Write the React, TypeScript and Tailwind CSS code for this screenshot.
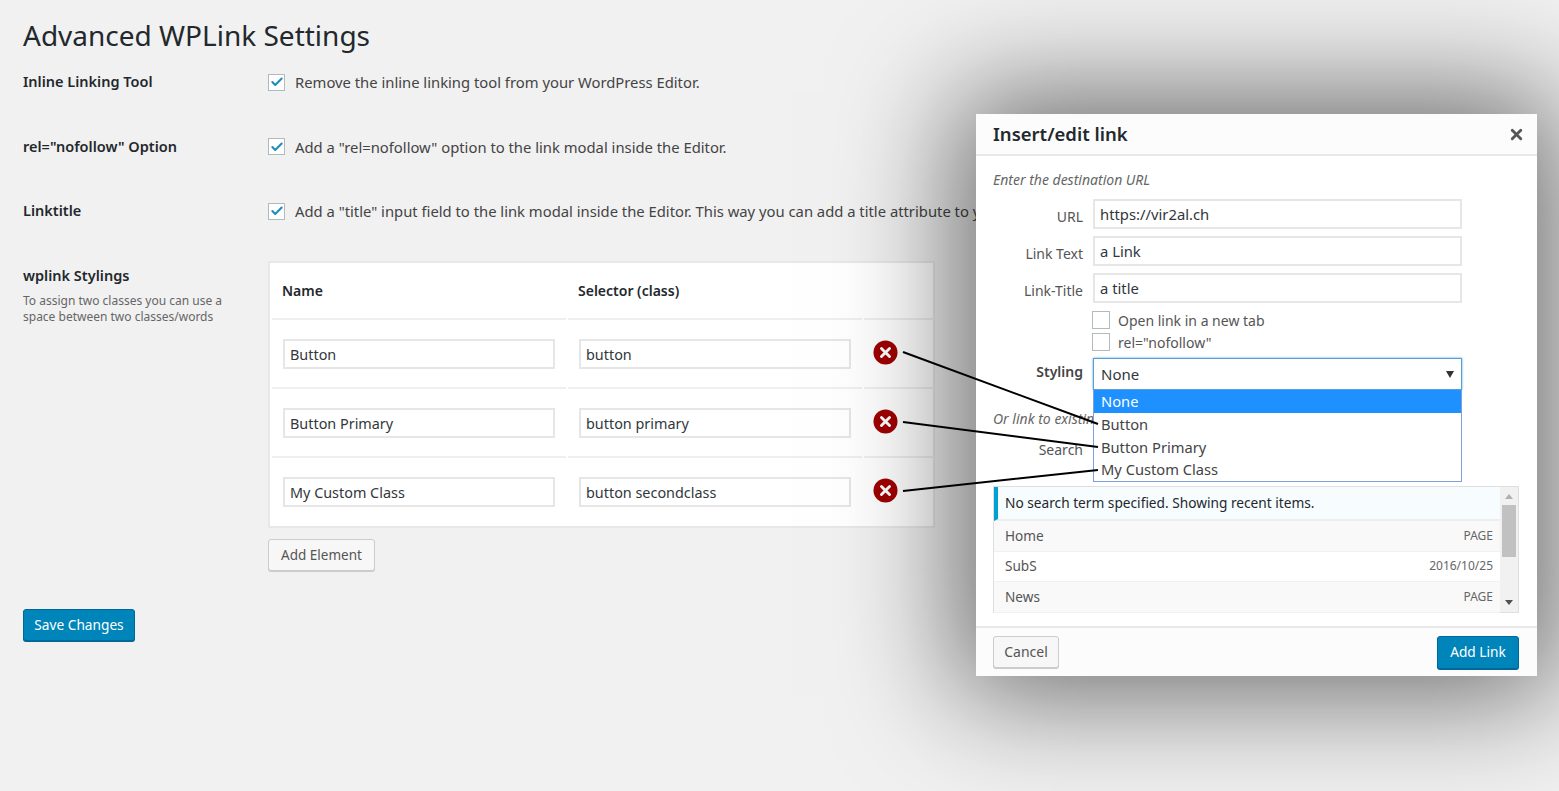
import { Check, X } from 'lucide-react';

const settings = [
  { label: 'Inline Linking Tool', text: 'Remove the inline linking tool from your WordPress Editor.' },
  { label: 'rel="nofollow" Option', text: 'Add a "rel=nofollow" option to the link modal inside the Editor.' },
  { label: 'Linktitle', text: 'Add a "title" input field to the link modal inside the Editor. This way you can add a title attribute to your links.' },
];

const stylings = [
  { name: 'Button', selector: 'button' },
  { name: 'Button Primary', selector: 'button primary' },
  { name: 'My Custom Class', selector: 'button secondclass' },
];

const results = [
  { title: 'Home', info: 'PAGE', bg: 'bg-[#f9f9f9]' },
  { title: 'SubS', info: '2016/10/25', bg: 'bg-white' },
  { title: 'News', info: 'PAGE', bg: 'bg-[#f9f9f9]' },
];

function DeleteIcon() {
  return (
    <svg width="25" height="25" viewBox="0 0 26 26" className="shrink-0 mb-[2px]">
      <circle cx="13" cy="13" r="12.5" fill="#a00000" />
      <path d="M8.8 8.8l8.4 8.4M17.2 8.8l-8.4 8.4" stroke="#fff" strokeWidth="3" strokeLinecap="round" />
    </svg>
  );
}

function ModalField({ label, value }: { label: string; value: string }) {
  return (
    <div className="flex items-start h-[37px]">
      <div className="w-[100px] pr-[10px] pt-[7px] text-right text-[14px] text-[#555]">{label}</div>
      <div className="w-[369px] h-[30px] border-2 border-[#e6e6e6] bg-white px-[5px] text-[14.8px] leading-[26px] text-[#32373c]">
        {value}
      </div>
    </div>
  );
}

function LinkModal() {
  return (
    <div className="absolute left-[976px] top-[114px] w-[561px] h-[562px] bg-white flex flex-col shadow-[0_0_110px_20px_rgba(0,0,0,0.55)]">
      {/* Header */}
      <div className="h-[42px] shrink-0 bg-[#fcfcfc] border-b-2 border-[#e8e8e8] pl-[17px] pr-[12px] flex items-center justify-between">
        <h2 className="text-[18.5px] font-semibold text-[#23282d]">Insert/edit link</h2>
        <X size={17} strokeWidth={4} className="text-[#555]" />
      </div>

      {/* Body */}
      <div className="relative flex-1 pl-[17px] pr-[18px]">
        <p className="pt-[13px] h-[43px] text-[14px] italic text-[#666]">Enter the destination URL</p>
        <ModalField label="URL" value="https://vir2al.ch" />
        <ModalField label="Link Text" value="a Link" />
        <ModalField label="Link-Title" value="a title" />

        <div className="ml-[99px] mt-[-1px] flex items-center gap-[8px] h-[22px] text-[14px] text-[#555]">
          <span className="w-[18px] h-[18px] border border-[#b4b9be] bg-white" />
          Open link in a new tab
        </div>
        <div className="ml-[99px] flex items-center gap-[8px] h-[22px] text-[14px] text-[#555]">
          <span className="w-[18px] h-[18px] border border-[#b4b9be] bg-white" />
          rel="nofollow"
        </div>

        <div className="flex mt-[5px]">
          <div className="w-[100px] pr-[10px] pt-[3px] text-right text-[14px] font-semibold text-[#444]">Styling</div>
          <div className="relative w-[369px]">
            <div className="h-[32px] border border-[#5b9dd9] shadow-[0_0_2px_rgba(30,140,190,0.8)] bg-white pl-[7px] pr-[7px] flex items-center justify-between text-[15px] text-[#32373c]">
              None
              <svg width="8" height="7" viewBox="0 0 8 7"><path d="M0 0h8L4 7z" fill="#333" /></svg>
            </div>
            {/* Open dropdown */}
            <div className="absolute z-20 left-0 top-[32px] w-full border border-[#7f9fd9] border-t-0 bg-white text-[14.7px] text-[#444]">
              <div className="h-[23px] bg-[#1e90ff] pl-[7px] text-white leading-[22px]">None</div>
              {stylings.map((s) => (
                <div key={s.name} className="h-[22.5px] pl-[7px] leading-[22px]">{s.name}</div>
              ))}
            </div>
          </div>
        </div>

        <p className="mt-[18px] h-[26px] text-[14px] italic text-[#666]">Or link to existing content</p>
        <div className="flex items-center h-[30px] mt-[2px]">
          <div className="w-[100px] pr-[10px] pb-[3px] text-right text-[14px] text-[#555]">Search</div>
          <div className="w-[369px] h-[30px] border-2 border-[#e6e6e6] bg-white" />
        </div>

        {/* Results */}
        <div className="mt-[20px] h-[127px] border border-[#dfdfdf] flex bg-white">
          <div className="flex-1 min-w-0">
            <div className="h-[34px] border-l-4 border-[#00a0d2] border-b-2 border-b-[#eeeeee] bg-[#f7fcfe] pl-[7px] flex items-center text-[13.7px] text-[#23282d]">
              No search term specified. Showing recent items.
            </div>
            {results.map((r) => (
              <div key={r.title} className={`${r.bg} h-[30.5px] pl-[11px] pr-[7px] flex items-center justify-between border-b border-[#f1f1f1] text-[13.6px] text-[#555]`}>
                {r.title}
                <span className="text-[12px] text-[#666]">{r.info}</span>
              </div>
            ))}
          </div>
          <div className="relative w-[18px] bg-[#f1f1f1] flex flex-col items-center justify-between py-[7px]">
            <svg width="8" height="5" viewBox="0 0 8 5"><path d="M4 0l4 5H0z" fill="#b0b0b0" /></svg>
            <div className="absolute left-[2px] top-[18px] w-[14px] h-[52px] bg-[#c1c1c1]" />
            <svg width="8" height="5" viewBox="0 0 8 5"><path d="M0 0h8L4 5z" fill="#505050" /></svg>
          </div>
        </div>
      </div>

      {/* Footer */}
      <div className="h-[50px] shrink-0 bg-[#fcfcfc] border-t-2 border-[#e8e8e8] pl-[17px] pr-[18px] flex items-center justify-between">
        <button className="h-[32px] w-[66px] pb-[1px] rounded-[3px] border border-[#cccccc] bg-[#f7f7f7] shadow-[0_1px_0_#cccccc] text-[14px] text-[#555]">Cancel</button>
        <button className="h-[33px] w-[82px] rounded-[3px] border border-[#006799] bg-[#0085ba] shadow-[0_1px_0_#006799] text-[13.7px] text-white">Add Link</button>
      </div>
    </div>
  );
}

export default function App() {
  return (
    <div className="relative h-[791px] w-[1559px] overflow-hidden bg-[#f1f1f1] font-['Noto_Sans',sans-serif]">
      <div className="pl-[23px] pt-[18px]">
        <h1 className="h-[38px] text-[28px] leading-[34px] text-[#23282d]">Advanced WPLink Settings</h1>

        <div className="-mt-[6px]">
          {settings.map((s) => (
            <div key={s.label} className="flex items-center h-[64.5px]">
              <div className="w-[245px] text-[14.5px] font-semibold text-[#23282d]">{s.label}</div>
              <span className="w-[17px] h-[17px] border border-[#b4b9be] bg-white flex items-center justify-center shrink-0">
                <Check size={14} strokeWidth={3.5} className="text-[#1e8cbe]" />
              </span>
              <span className="ml-[10px] whitespace-nowrap text-[14.8px] text-[#444]">{s.text}</span>
            </div>
          ))}
        </div>

        <div className="flex mt-[17.5px]">
          <div className="w-[245px] pt-[4px]">
            <div className="text-[14.5px] font-semibold text-[#23282d]">wplink Stylings</div>
            <p className="mt-[6px] w-[215px] text-[12px] leading-[16px] text-[#666]">
              To assign two classes you can use a space between two classes/words
            </p>
          </div>
          <div>
            <div className="w-[667px] h-[267px] border-2 border-[#e8e8e8] bg-white px-[2px]">
              <div className="grid grid-cols-[294px_294px_70px] gap-x-[2px] h-[57px]">
                <div className="border-b-2 border-[#efefef] pl-[10px] pt-[17px] text-[14px] font-semibold text-[#23282d]">Name</div>
                <div className="border-b-2 border-[#efefef] pl-[10px] pt-[17px] text-[14px] font-semibold text-[#23282d]">Selector (class)</div>
                <div className="border-b-2 border-[#efefef]" />
              </div>
              {stylings.map((s, i) => (
                <div key={s.name} className="grid grid-cols-[294px_294px_70px] gap-x-[2px] h-[69px]">
                  <div className={`${i < 2 ? 'border-[#efefef]' : 'border-transparent'} border-b-2 pl-[11px] pr-[11px] flex items-center`}>
                    <div className="w-full h-[30px] border-2 border-[#e6e6e6] bg-white px-[5px] text-[14.4px] leading-[27px] text-[#32373c]">{s.name}</div>
                  </div>
                  <div className={`${i < 2 ? 'border-[#efefef]' : 'border-transparent'} border-b-2 pl-[11px] pr-[11px] flex items-center`}>
                    <div className="w-full h-[30px] border-2 border-[#e6e6e6] bg-white px-[5px] text-[14.4px] leading-[27px] text-[#32373c]">{s.selector}</div>
                  </div>
                  <div className={`${i < 2 ? 'border-[#efefef]' : 'border-transparent'} border-b-2 pl-[9px] flex items-center`}>
                    <DeleteIcon />
                  </div>
                </div>
              ))}
            </div>
            <button className="mt-[11px] h-[32px] w-[107px] rounded-[3px] border border-[#cccccc] bg-[#f7f7f7] shadow-[0_1px_0_#cccccc] text-[13.5px] text-[#555]">Add Element</button>
          </div>
        </div>

        <button className="mt-[38px] h-[32px] w-[112px] rounded-[3px] border border-[#006799] bg-[#0085ba] shadow-[0_1px_0_#006799] text-[13.7px] text-white">Save Changes</button>
      </div>

      <LinkModal />

      {/* Annotation lines from delete icons to dropdown options */}
      <svg width="1559" height="791" className="absolute left-0 top-0 z-30 pointer-events-none">
        <path d="M903 352L1098 424M903 422L1098 447M903 491L1098 470" stroke="#000" strokeWidth="2" fill="none" />
      </svg>
    </div>
  );
}
